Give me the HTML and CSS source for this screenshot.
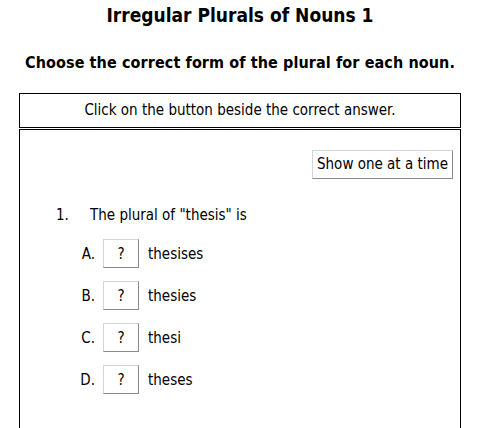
FILE: index.html
```html
<!DOCTYPE html>
<html lang="en">
<head>
    <meta charset="UTF-8">
    <title>Irregular Plurals of Nouns 1</title>
    <link rel="stylesheet" href="styles.css">
</head>
<body>
    <h1 class="title">Irregular Plurals of Nouns 1</h1>
    <h2 class="subtitle">Choose the correct form of the plural for each noun.</h2>

    <div class="panel instructions">Click on the button beside the correct answer.</div>

    <div class="panel quiz">
        <div class="toolbar">
            <button class="btn" id="toggleButton">Show one at a time</button>
        </div>

        <div class="question">
            <div class="q-line">
                <span class="q-num">1.</span>
                <span class="q-text">The plural of "thesis" is</span>
            </div>
            <div class="option">
                <span class="opt-label">A.</span>
                <button class="btn answer">?</button>
                <span class="opt-text">thesises</span>
            </div>
            <div class="option">
                <span class="opt-label">B.</span>
                <button class="btn answer">?</button>
                <span class="opt-text">thesies</span>
            </div>
            <div class="option">
                <span class="opt-label">C.</span>
                <button class="btn answer">?</button>
                <span class="opt-text">thesi</span>
            </div>
            <div class="option">
                <span class="opt-label">D.</span>
                <button class="btn answer">?</button>
                <span class="opt-text">theses</span>
            </div>
        </div>
    </div>
</body>
</html>
```
FILE: styles.css
```css
body {
    margin: 0;
    padding: 0 19px;
    background-color: #ffffff;
    color: #000000;
    font-family: "DejaVu Sans Condensed", "DejaVu Sans", sans-serif;
    font-size: 15px;
    line-height: 18px;
}

.title {
    margin: 4px 0 0;
    font-size: 19px;
    line-height: 22px;
    text-align: center;
}

.subtitle {
    margin: 27px 0 0;
    font-size: 16px;
    line-height: 20px;
    letter-spacing: 0.1px;
    text-align: center;
}

.panel {
    border: 1px solid #000000;
}

.instructions {
    margin-top: 20px;
    padding: 7px 0 8px;
    text-align: center;
}

.quiz {
    margin-top: 1px;
    padding: 20px 0 40px;
}

.toolbar {
    display: flex;
    justify-content: flex-end;
    padding-right: 7px;
}

.btn {
    background-color: #ffffff;
    color: #000000;
    font-family: inherit;
    font-size: 15px;
    line-height: 18px;
    border: 1px solid;
    border-color: #d4d4d4 #8a8a8a #8a8a8a #d4d4d4;
    border-radius: 0;
    padding: 4px 4px 5px;
    cursor: pointer;
}

.question {
    margin-top: 27px;
}

.q-line {
    display: flex;
    padding-left: 36px;
}

.q-num {
    width: 34px;
}

.option {
    display: flex;
    align-items: center;
    margin-top: 13px;
    padding-left: 40px;
}

.q-line + .option {
    margin-top: 15px;
}

.opt-label {
    width: 35px;
    text-align: right;
    margin-right: 8px;
}

.answer {
    width: 36px;
    height: 29px;
    padding: 0;
}

.opt-text {
    margin-left: 9px;
}
```
